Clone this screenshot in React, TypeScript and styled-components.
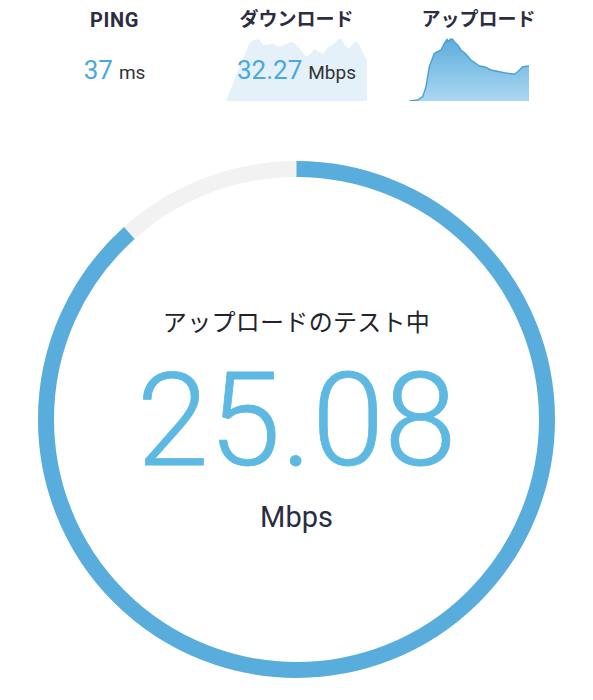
import React from "react";
import styled, { createGlobalStyle } from "styled-components";

const GlobalStyle = createGlobalStyle`
    html, body {
        margin: 0;
        padding: 0;
        background: #ffffff;
    }
    body {
        font-family: Roboto, "Noto Sans CJK JP", sans-serif;
        color: #2b2c3e;
    }
`;

const Page = styled.div`
    width: 593px;
    height: 700px;
    overflow: hidden;
    background: #ffffff;
`;

const StatsRow = styled.div`
    display: grid;
    grid-template-columns: repeat(3, 182px);
    justify-content: center;
    padding-top: 8px;
`;

const Stat = styled.div`
    display: flex;
    flex-direction: column;
    align-items: center;
    gap: 4px;
`;

const StatTitle = styled.div<{ $latin?: boolean }>`
    font-size: ${(p) => (p.$latin ? 20 : 19)}px;
    letter-spacing: ${(p) => (p.$latin ? 0.6 : 0)}px;
    line-height: 24px;
    font-weight: 700;
    color: #2c2d40;
`;

const StatBody = styled.div`
    display: grid;
    grid-template-areas: "stack";
    width: 100%;
    height: 65px;
`;

const Spark = styled.svg<{ $shift?: number }>`
    grid-area: stack;
    justify-self: center;
    align-self: end;
    margin-right: ${(p) => (p.$shift ? p.$shift * 2 : 0)}px;
`;

const StatValue = styled.div`
    grid-area: stack;
    justify-self: center;
    align-self: start;
    margin-top: 21px;
    display: flex;
    align-items: baseline;
    gap: 6px;
    line-height: 26px;
    white-space: nowrap;
`;

const Number = styled.span`
    font-size: 26px;
    font-weight: 400;
    color: #4aa7e0;
`;

const Unit = styled.span`
    font-size: 19px;
    color: #333338;
`;

const Gauge = styled.div`
    display: grid;
    grid-template-areas: "g";
    width: 517px;
    height: 517px;
    margin: 60px auto 0;
`;

const Ring = styled.svg`
    grid-area: g;
`;

const GaugeContent = styled.div`
    grid-area: g;
    display: flex;
    flex-direction: column;
    align-items: center;
    padding-top: 147px;
`;

const Phase = styled.div`
    font-size: 24px;
    line-height: 30px;
    font-weight: 400;
    color: #222228;
    letter-spacing: 0.3px;
`;

const Speed = styled.div`
    margin-top: 18px;
    font-size: 130px;
    line-height: 130px;
    font-weight: 300;
    color: #5db8e2;
    -webkit-text-stroke: 0.8px #5db8e2;
`;

const SpeedUnit = styled.div`
    margin-top: 14px;
    font-size: 29px;
    line-height: 34px;
    font-weight: 400;
    color: #2a2c44;
`;

const downloadPts =
    "0,65 23.3,7.3 28.3,4 33.3,3.3 36.7,9 41.7,9 46.7,7.3 50,10 55,10 60,8 65,5.7 69,7.3 75,14 80,20.7 83.3,19 88.3,13.3 93.3,15.7 96.7,18 101.7,11.3 106.7,9 111.7,4 115,2.3 119,10 123.3,12.3 126.7,8 130,5 133.3,9 136.7,16.7 141,24 141,65";

const uploadLine =
    "0.3,63 8.7,62 13.7,58.7 17,48.7 20.3,28.7 25.3,15.3 32,12 35.3,5.3 38,1.3 39.3,3.7 41.3,1.3 43.7,1.3 45.3,3.7 48.7,7 52,12 56,15.3 62,22 70.3,28 75.3,28.7 82,32 95.3,34.7 105.3,36.3 108.7,33.7 113.7,28.7 120,28";

const DownloadGraph = () => (
    <Spark width={141} height={65} viewBox="0 0 141 65">
        <polygon points={downloadPts} fill="#e4f1f9" />
    </Spark>
);

const UploadGraph = () => (
    <Spark $shift={10} width={120} height={63} viewBox="0 0 120 63">
        <defs>
            <linearGradient id="upFill" x1="0" y1="0" x2="0" y2="1">
                <stop offset="0" stopColor="#5eaedd" />
                <stop offset="1" stopColor="#abd7f0" />
            </linearGradient>
        </defs>
        <polygon points={`${uploadLine} 120,63 0.3,63`} fill="url(#upFill)" />
        <polyline points={uploadLine} fill="none" stroke="#4b9fd7" strokeWidth={1.4} strokeLinejoin="round" />
    </Spark>
);

const R = 250.5;
const C = 2 * Math.PI * R;
const progress = 318 / 360;

const App = () => {
    return (
        <Page>
            <GlobalStyle />
            <StatsRow>
                <Stat>
                    <StatTitle $latin>PING</StatTitle>
                    <StatBody>
                        <StatValue>
                            <Number>37</Number>
                            <Unit>ms</Unit>
                        </StatValue>
                    </StatBody>
                </Stat>
                <Stat>
                    <StatTitle>ダウンロード</StatTitle>
                    <StatBody>
                        <DownloadGraph />
                        <StatValue>
                            <Number>32.27</Number>
                            <Unit>Mbps</Unit>
                        </StatValue>
                    </StatBody>
                </Stat>
                <Stat>
                    <StatTitle>アップロード</StatTitle>
                    <StatBody>
                        <UploadGraph />
                    </StatBody>
                </Stat>
            </StatsRow>

            <Gauge>
                <Ring width={517} height={517} viewBox="0 0 517 517">
                    <circle cx={258.5} cy={258.5} r={R} fill="none" stroke="#f2f2f2" strokeWidth={16} />
                    <circle
                        cx={258.5}
                        cy={258.5}
                        r={R}
                        fill="none"
                        stroke="#58addd"
                        strokeWidth={16}
                        strokeDasharray={`${C * progress} ${C}`}
                        transform="rotate(-90 258.5 258.5)"
                    />
                </Ring>
                <GaugeContent>
                    <Phase>アップロードのテスト中</Phase>
                    <Speed>25.08</Speed>
                    <SpeedUnit>Mbps</SpeedUnit>
                </GaugeContent>
            </Gauge>
        </Page>
    );
};

export default App;
